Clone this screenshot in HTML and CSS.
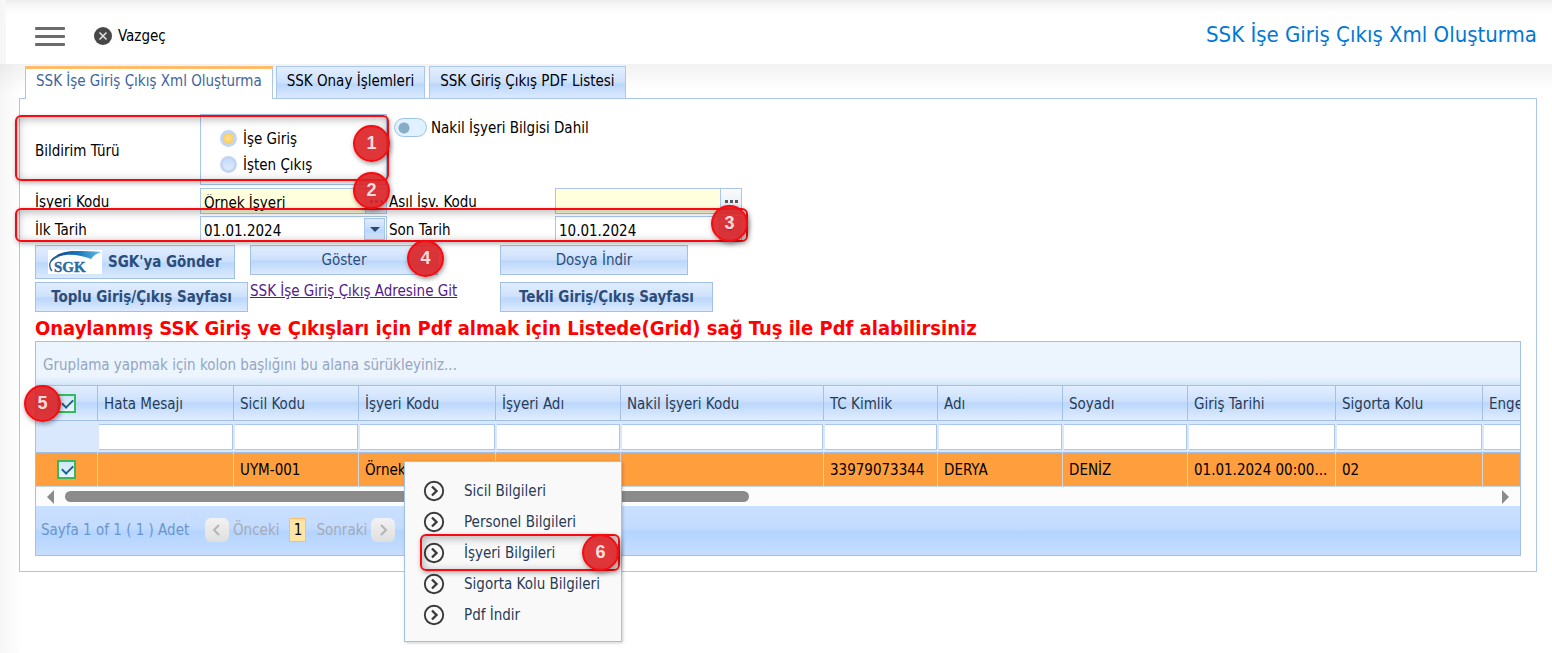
FILE: index.html
```html
<!DOCTYPE html>
<html lang="tr">
<head>
  <meta charset="UTF-8">
  <title>SSK İşe Giriş Çıkış Xml Oluşturma</title>
  <link rel="stylesheet" href="styles.css">
</head>
<body>
  <svg class="symbols" aria-hidden="true">
    <symbol id="arrow-circle" viewBox="0 0 22 22">
      <circle cx="11" cy="11" r="9.2" fill="none" stroke="#3a3a3a" stroke-width="1.9"/>
      <path d="M9 6.5l4.5 4.5L9 15.5" fill="none" stroke="#3a3a3a" stroke-width="2.4"/>
    </symbol>
  </svg>

  <header class="topbar">
    <button class="menu-toggle" aria-label="Menü"><span></span><span></span><span></span></button>
    <button class="cancel">
      <svg width="18" height="18" viewBox="0 0 18 18">
        <circle cx="9" cy="9" r="9" fill="#474747"/>
        <path d="M5.5 5.5l7 7M12.5 5.5l-7 7" stroke="#e4e4e4" stroke-width="1.5"/>
      </svg>
      Vazgeç
    </button>
    <h1 class="page-title">SSK İşe Giriş Çıkış Xml Oluşturma</h1>
  </header>

  <main>
    <nav class="tabs">
      <button class="tab active">SSK İşe Giriş Çıkış Xml Oluşturma</button>
      <button class="tab">SSK Onay İşlemleri</button>
      <button class="tab">SSK Giriş Çıkış PDF Listesi</button>
    </nav>

    <section class="panel">
      <form class="form">
        <span class="form-label">Bildirim Türü</span>
        <div class="radio-group">
          <label><input type="radio" name="tur" checked>İşe Giriş</label>
          <label><input type="radio" name="tur">İşten Çıkış</label>
        </div>
        <label class="switch"><input type="checkbox">Nakil İşyeri Bilgisi Dahil</label>

        <label class="form-label" for="isyeri">İşyeri Kodu</label>
        <div class="field required">
          <input type="text" id="isyeri" value="Örnek İşyeri">
          <button type="button" class="dots" aria-label="Seç"><i></i><i></i><i></i></button>
        </div>
        <label class="form-label second" for="asil">Asıl İşv. Kodu</label>
        <div class="field required">
          <input type="text" id="asil">
          <button type="button" class="dots" aria-label="Seç"><i></i><i></i><i></i></button>
        </div>

        <label class="form-label" for="ilk-tarih">İlk Tarih</label>
        <div class="field">
          <input type="text" id="ilk-tarih" value="01.01.2024">
          <button type="button" class="drop" aria-label="Takvim"></button>
        </div>
        <label class="form-label second" for="son-tarih">Son Tarih</label>
        <div class="field">
          <input type="text" id="son-tarih" value="10.01.2024">
          <button type="button" class="drop" aria-label="Takvim"></button>
        </div>
      </form>

      <div class="actions">
        <button class="btn bold sgk">
          <svg width="54" height="24" viewBox="0 0 54 24">
            <defs>
              <linearGradient id="swoosh" x1="0" x2="1">
                <stop offset="0" stop-color="#123f7c"/>
                <stop offset=".55" stop-color="#1677bd"/>
                <stop offset="1" stop-color="#6bb9e3"/>
              </linearGradient>
            </defs>
            <rect width="54" height="24" fill="#fff"/>
            <path d="M2 13C5 5 15 1 27 1c9 0 18 0 26 1-3 1-7 3-10 7C33 5 19 3 10 7 6 9 4 11 2 13z" fill="url(#swoosh)"/>
            <path d="M4 21C-1 15 3 8 10 6.500" fill="none" stroke="#2c6498" stroke-width="1.4"/>
            <text x="6" y="22" font-family="Liberation Serif, serif" font-size="15" fill="#2b6aa3" stroke="#2b6aa3" stroke-width=".4">SGK</text>
          </svg>
          SGK'ya Gönder
        </button>
        <button class="btn wide">Göster</button>
        <button class="btn wide">Dosya İndir</button>
        <button class="btn bold page-btn">Toplu Giriş/Çıkış Sayfası</button>
        <a href="#">SSK İşe Giriş Çıkış Adresine Git</a>
        <button class="btn bold page-btn">Tekli Giriş/Çıkış Sayfası</button>
      </div>

      <p class="notice">Onaylanmış SSK Giriş ve Çıkışları için Pdf almak için Listede(Grid) sağ Tuş ile Pdf alabilirsiniz</p>

      <div class="grid">
        <div class="group-panel">Gruplama yapmak için kolon başlığını bu alana sürükleyiniz...</div>
        <table>
          <colgroup>
            <col class="c-check"><col class="c-error"><col class="c-code"><col class="c-work"><col class="c-code">
            <col class="c-transfer"><col class="c-id"><col class="c-code"><col class="c-code"><col class="c-date">
            <col class="c-branch"><col>
          </colgroup>
          <thead>
            <tr>
              <th><input type="checkbox" aria-label="Tümünü seç" checked></th>
              <th>Hata Mesajı</th>
              <th>Sicil Kodu</th>
              <th>İşyeri Kodu</th>
              <th>İşyeri Adı</th>
              <th>Nakil İşyeri Kodu</th>
              <th>TC Kimlik</th>
              <th>Adı</th>
              <th>Soyadı</th>
              <th>Giriş Tarihi</th>
              <th>Sigorta Kolu</th>
              <th>Enge</th>
            </tr>
          </thead>
          <tbody>
            <tr class="filters">
              <td></td>
              <td><input type="text" aria-label="Hata Mesajı"></td>
              <td><input type="text" aria-label="Sicil Kodu"></td>
              <td><input type="text" aria-label="İşyeri Kodu"></td>
              <td><input type="text" aria-label="İşyeri Adı"></td>
              <td><input type="text" aria-label="Nakil İşyeri Kodu"></td>
              <td><input type="text" aria-label="TC Kimlik"></td>
              <td><input type="text" aria-label="Adı"></td>
              <td><input type="text" aria-label="Soyadı"></td>
              <td><input type="text" aria-label="Giriş Tarihi"></td>
              <td><input type="text" aria-label="Sigorta Kolu"></td>
              <td><input type="text" aria-label="Engel"></td>
            </tr>
            <tr class="selected">
              <td><input type="checkbox" aria-label="Satırı seç" checked></td>
              <td></td>
              <td>UYM-001</td>
              <td>Örnek</td>
              <td></td>
              <td></td>
              <td>33979073344</td>
              <td>DERYA</td>
              <td>DENİZ</td>
              <td>01.01.2024 00:00...</td>
              <td>02</td>
              <td></td>
            </tr>
          </tbody>
        </table>
        <div class="scrollbar">
          <span class="arrow left"></span>
          <div class="track"><div class="thumb"></div></div>
          <span class="arrow right"></span>
        </div>
        <div class="pager">
          <span class="summary">Sayfa 1 of 1 ( 1 ) Adet</span>
          <button class="page-arrow" aria-label="Önceki sayfa"><svg width="24" height="24"><path d="M14 7l-5 5 5 5" fill="none" stroke="#b5b5b5" stroke-width="2"/></svg></button>
          <span class="muted">Önceki</span>
          <b class="current">1</b>
          <span class="muted">Sonraki</span>
          <button class="page-arrow" aria-label="Sonraki sayfa"><svg width="24" height="24"><path d="M10 7l5 5-5 5" fill="none" stroke="#b5b5b5" stroke-width="2"/></svg></button>
        </div>
      </div>
    </section>
  </main>

  <ul class="context-menu">
    <li><a href="#"><svg><use href="#arrow-circle"/></svg>Sicil Bilgileri</a></li>
    <li><a href="#"><svg><use href="#arrow-circle"/></svg>Personel Bilgileri</a></li>
    <li><a href="#"><svg><use href="#arrow-circle"/></svg>İşyeri Bilgileri</a></li>
    <li><a href="#"><svg><use href="#arrow-circle"/></svg>Sigorta Kolu Bilgileri</a></li>
    <li><a href="#"><svg><use href="#arrow-circle"/></svg>Pdf İndir</a></li>
  </ul>

  <!-- step markers -->
  <div class="frame frame-type"></div>
  <div class="frame frame-dates"></div>
  <div class="frame frame-menu"></div>
  <span class="step step-1">1</span>
  <span class="step step-2">2</span>
  <span class="step step-3">3</span>
  <span class="step step-4">4</span>
  <span class="step step-5">5</span>
  <span class="step step-6">6</span>
</body>
</html>
```
FILE: styles.css
```css
* {
  box-sizing: border-box;
}

body {
  position: relative;
  margin: 0;
  min-height: 100vh;
  background: linear-gradient(to right, #f6f6f6, #ffffff 22px);
  font-family: Tahoma, "DejaVu Sans Condensed", "Noto Sans", sans-serif;
  font-size: 15px;
  color: #000000;
}

button,
input {
  font: inherit;
  color: inherit;
  margin: 0;
}

button {
  cursor: pointer;
}

.symbols {
  display: none;
}

/* header */
.topbar {
  display: flex;
  align-items: center;
  height: 64px;
  margin-left: 6px;
  padding: 8px 15px 0 29px;
  background: linear-gradient(#ececec, #f7f7f7 5px, #fdfdfd 12px, #ffffff 20px);
}

.menu-toggle {
  display: flex;
  flex-direction: column;
  gap: 5px;
  width: 30px;
  padding: 0;
  border: none;
  background: none;
}

.menu-toggle span {
  height: 3px;
  width: 30px;
  border-radius: 1px;
  background-color: #6b6b6b;
}

.cancel {
  display: flex;
  align-items: center;
  gap: 6px;
  margin-left: 29px;
  padding: 0;
  border: none;
  background: none;
}

.page-title {
  margin: 0 0 0 auto;
  padding-bottom: 4px;
  font-size: 22px;
  font-weight: normal;
  color: #0078d4;
}

/* tabs */
main {
  padding: 2px 15px 0 19px;
  background: linear-gradient(rgba(0, 0, 0, 0.05), rgba(0, 0, 0, 0) 28px);
}

.tabs {
  display: flex;
  gap: 4px;
  height: 33px;
  margin-bottom: -1px;
  padding-left: 6px;
}

.tab {
  padding: 0 10px 3px;
  border: 1px solid #a9c6ec;
  background: linear-gradient(#e2eeff, #cde1fc 50%, #bbd7fb 56%, #dceaff);
  white-space: nowrap;
}

.tab.active {
  z-index: 1;
  margin-right: -1px;
  padding-bottom: 6px;
  border-top: 3px solid #ffbd69;
  border-bottom: none;
  background: #ffffff;
  color: #41659a;
}

.panel {
  padding: 15px;
  border: 1px solid #a9c6ec;
  background: #ffffff;
}

/* form */
.form {
  display: grid;
  grid-template-columns: 165px 187px 168px 187px;
  grid-template-rows: 72px 26px 26px;
  row-gap: 2px;
  align-items: center;
}

.form-label {
  padding-top: 2px;
}

.form-label.second {
  padding-left: 2px;
}

.radio-group {
  display: flex;
  flex-direction: column;
  justify-content: center;
  gap: 4px;
  height: 71px;
  align-self: start;
  padding: 4px 0 0 19px;
  border: 1px solid #a9c6ec;
}

.radio-group label {
  display: flex;
  align-items: center;
  gap: 6px;
  height: 22px;
}

.radio-group input {
  appearance: none;
  width: 17px;
  height: 17px;
  border: 3px solid #c3d5f2;
  border-radius: 50%;
  background: linear-gradient(#c6dcfb, #dcebff);
}

.radio-group input:checked {
  background: radial-gradient(#ffe490, #fbc24e);
}

.switch {
  display: flex;
  grid-column: span 2;
  align-items: center;
  align-self: start;
  gap: 4px;
  height: 27px;
  padding-left: 7px;
}

.switch input {
  appearance: none;
  width: 33px;
  height: 19px;
  border: 1px solid #9dc3e8;
  border-radius: 10px;
  background: radial-gradient(circle at 9px 9px, #86aec6 5px, #e0f2ff 6px);
}

.field {
  display: flex;
  height: 26px;
  border: 1px solid #a9c6ec;
  background: #ffffff;
}

.field.required {
  background: #ffffdd;
}

.field input {
  flex: 1;
  min-width: 0;
  padding: 3px 3px 0;
  border: none;
  background: none;
}

.dots {
  display: flex;
  align-items: center;
  justify-content: center;
  gap: 2px;
  width: 21px;
  padding: 0;
  border: none;
  border-left: 1px solid #a9c6ec;
  background: linear-gradient(#fafbfd, #e2e8f2);
}

.dots i {
  width: 3px;
  height: 3px;
  background: #5a5a5a;
}

.drop {
  display: flex;
  align-items: center;
  justify-content: center;
  width: 21px;
  margin: 1px;
  padding: 0;
  border: 1px solid #a9c6ec;
  background: linear-gradient(#e2eeff, #bbd7fb 60%, #dceaff);
}

.drop::before {
  content: "";
  border: 5px solid transparent;
  border-top-color: #2d4873;
  border-bottom: none;
}

/* buttons */
.actions {
  display: grid;
  grid-template-columns: 215px 250px auto;
  grid-template-rows: 34px 30px;
  row-gap: 3px;
  justify-items: start;
  align-items: start;
  margin-top: 3px;
}

.btn {
  height: 30px;
  padding: 0 12px;
  border: 1px solid #a3c0e8;
  background: linear-gradient(#e2eeff, #cde1fc 48%, #bbd7fb 54%, #dceaff);
  color: #2c4d79;
  white-space: nowrap;
}

.btn.bold {
  font-weight: bold;
}

.btn.wide {
  width: 188px;
}

.btn.page-btn {
  width: 213px;
}

.sgk {
  display: flex;
  align-items: center;
  gap: 6px;
  width: 200px;
  height: 34px;
}

.actions a {
  color: #551a8b;
}

.notice {
  margin: 0;
  padding-top: 3px;
  font-size: 20px;
  font-weight: bold;
  line-height: 26px;
  color: #ff0000;
}

/* grid */
.grid {
  overflow: hidden;
  border: 1px solid #a3c0e8;
}

.group-panel {
  height: 43px;
  padding: 0 7px;
  line-height: 46px;
  background: linear-gradient(#ecf4fe 80%, #d2e6f8);
  color: #94a6c2;
}

table {
  width: 100%;
  table-layout: fixed;
  border-collapse: separate;
  border-spacing: 0;
}

.c-check { width: 62px; }
.c-error { width: 136px; }
.c-code { width: 125px; }
.c-work { width: 137px; }
.c-transfer { width: 203px; }
.c-id { width: 114px; }
.c-date { width: 148px; }
.c-branch { width: 147px; }

th,
td {
  padding: 0 6px;
  border-right: 1px solid #a3c0e8;
  text-align: left;
  white-space: nowrap;
}

th:last-child,
td:last-child {
  padding-right: 0;
  border-right: none;
}

th {
  height: 36px;
  padding-top: 1px;
  border-top: 1px solid #a3c0e8;
  border-bottom: 1px solid #a3c0e8;
  background: linear-gradient(#e2eeff, #cde1fc 44%, #bbd7fb 50%, #e0edff);
  font-weight: normal;
  color: #283b56;
}

.filters td {
  height: 32px;
  padding: 0 0 0 1px;
  border-right-color: #d9e8fd;
  border-bottom: 1px solid #a3c0e8;
  background: #d9e8fd;
}

.filters input {
  display: block;
  width: 100%;
  height: 26px;
  border: 1px solid #a9c6ec;
  border-left: none;
  background: #ffffff;
}

.filters td:last-child input {
  border-right: none;
}

.selected td {
  height: 34px;
  border-right-color: #d5d5dc;
  border-bottom: 1px solid #c5d8ee;
  background: #ff9e3d;
}

th:first-child,
.selected td:first-child {
  text-align: center;
}

table input[type="checkbox"] {
  appearance: none;
  display: block;
  position: relative;
  width: 19px;
  height: 19px;
  margin: 0 auto;
  border: 2px solid #35bb5c;
  background: linear-gradient(#cfe6f8, #e9f5ff);
}

table input[type="checkbox"]::after {
  content: "";
  position: absolute;
  left: 3px;
  top: 3px;
  width: 9px;
  height: 5px;
  border: solid #1e5f94;
  border-width: 0 0 2px 2px;
  transform: rotate(-45deg);
}

.scrollbar {
  display: flex;
  align-items: center;
  gap: 11px;
  height: 19px;
  padding: 0 11px;
  background: #fcfcfc;
}

.track {
  flex: 1;
}

.thumb {
  width: 48%;
  height: 11px;
  border-radius: 6px;
  background: #8b8b8b;
}

.arrow {
  border: 7px solid transparent;
}

.arrow.left {
  border-right-color: #8b8b8b;
  border-left: none;
}

.arrow.right {
  border-left-color: #8b8b8b;
  border-right: none;
}

.pager {
  display: flex;
  align-items: center;
  height: 49px;
  padding: 0 5px 2px;
  background: linear-gradient(#cae0ff, #c3dbff 45%, #b4d4ff 53%, #c6deff);
}

.summary {
  width: 164px;
  color: #6b96cb;
  white-space: nowrap;
}

.page-arrow {
  width: 24px;
  height: 24px;
  padding: 0;
  border: none;
  border-radius: 6px;
  background: linear-gradient(#f2f2f2, #dfdfdf);
}

.page-arrow svg {
  display: block;
}

.muted {
  margin: 0 4px;
  color: #a5abb5;
}

.current {
  width: 17px;
  height: 24px;
  margin: 0 6px;
  border: 1px solid #ffbd69;
  background: #ffe5a5;
  font-weight: normal;
  line-height: 22px;
  text-align: center;
}

/* context menu */
.context-menu {
  position: absolute;
  top: 461px;
  left: 404px;
  width: 218px;
  margin: 0;
  padding: 13px 0 11px;
  border: 1px solid #a3c0e8;
  background: #f9f9f9;
  box-shadow: 1px 1px 3px rgba(0, 0, 0, 0.2);
  list-style: none;
}

.context-menu a {
  display: flex;
  align-items: center;
  gap: 19px;
  height: 31px;
  padding-left: 18px;
  color: #283b56;
  text-decoration: none;
}

.context-menu svg {
  width: 22px;
  height: 22px;
}

/* step markers */
.frame {
  position: absolute;
  border: 2px solid #f90a10;
  border-radius: 6px;
  box-shadow: 1px 2px 5px rgba(0, 0, 0, 0.3), inset 1px 2px 10px rgba(0, 0, 0, 0.3);
  pointer-events: none;
}

.frame-type {
  top: 115px;
  left: 15px;
  width: 374px;
  height: 66px;
}

.frame-dates {
  top: 208px;
  left: 15px;
  width: 733px;
  height: 34px;
}

.frame-menu {
  top: 534px;
  left: 420px;
  width: 200px;
  height: 37px;
}

.step {
  position: absolute;
  width: 37px;
  height: 37px;
  border: 2px solid #f90a10;
  border-radius: 50%;
  background: rgba(218, 32, 36, 0.9);
  box-shadow: 1px 2px 5px rgba(0, 0, 0, 0.4);
  font-family: "Liberation Sans", Arial, sans-serif;
  font-size: 18px;
  font-weight: bold;
  line-height: 33px;
  text-align: center;
  color: #fbdcdc;
}

.step-1 { top: 125px; left: 353px; }
.step-2 { top: 172px; left: 353px; }
.step-3 { top: 205px; left: 711px; }
.step-4 { top: 240px; left: 407px; }
.step-5 { top: 385px; left: 24px; }
.step-6 { top: 534px; left: 582px; }
```
